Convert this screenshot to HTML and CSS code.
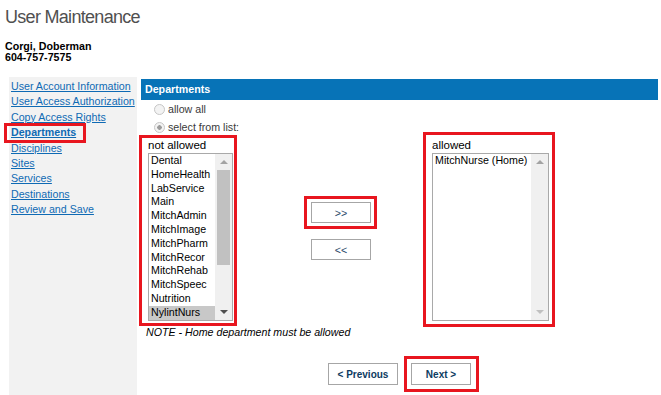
FILE: index.html
```html
<!DOCTYPE html>
<html lang="en">
<head>
  <meta charset="UTF-8">
  <meta name="viewport" content="width=device-width, initial-scale=1.0">
  <title>User Maintenance - Departments</title>
  <link rel="stylesheet" href="styles.css">
</head>
<body>
  <div class="page">
    <h1 class="page-title">User Maintenance</h1>
    <div class="user-info">
      <div>Corgi, Doberman</div>
      <div>604-757-7575</div>
    </div>

    <div class="layout">
      <nav class="side-nav">
        <a href="#">User Account Information</a>
        <a href="#">User Access Authorization</a>
        <a href="#">Copy Access Rights</a>
        <a href="#" class="current mark mark-nav">Departments</a>
        <a href="#">Disciplines</a>
        <a href="#">Sites</a>
        <a href="#">Services</a>
        <a href="#">Destinations</a>
        <a href="#">Review and Save</a>
      </nav>

      <div class="main">
        <div class="section-head">Departments</div>

        <div class="radio-row">
          <input type="radio" name="scope" id="scope-all" disabled>
          <label for="scope-all">allow all</label>
        </div>
        <div class="radio-row">
          <input type="radio" name="scope" id="scope-list" checked disabled>
          <label for="scope-list">select from list:</label>
        </div>

        <div class="pick">
          <div class="pick-col mark mark-from">
            <div class="pick-label">not allowed</div>
            <div class="listbox narrow">
              <ul class="options">
                <li>Dental</li>
                <li>HomeHealth</li>
                <li>LabService</li>
                <li>Main</li>
                <li>MitchAdmin</li>
                <li>MitchImage</li>
                <li>MitchPharm</li>
                <li>MitchRecor</li>
                <li>MitchRehab</li>
                <li>MitchSpeec</li>
                <li>Nutrition</li>
                <li class="selected">NylintNurs</li>
              </ul>
              <div class="scrollbar">
                <div class="sb-btn"><span class="tri-up"></span></div>
                <div class="sb-track"><div class="sb-thumb"></div></div>
                <div class="sb-btn"><span class="tri-down active"></span></div>
              </div>
            </div>
          </div>

          <div class="pick-moves">
            <div class="mark mark-add">
              <button class="move-btn">&gt;&gt;</button>
            </div>
            <button class="move-btn">&lt;&lt;</button>
          </div>

          <div class="pick-col wide mark mark-to">
            <div class="pick-label">allowed</div>
            <div class="listbox">
              <ul class="options">
                <li>MitchNurse (Home)</li>
              </ul>
              <div class="scrollbar">
                <div class="sb-btn"><span class="tri-up"></span></div>
                <div class="sb-track"></div>
                <div class="sb-btn"><span class="tri-down"></span></div>
              </div>
            </div>
          </div>
        </div>

        <div class="note">NOTE - Home department must be allowed</div>

        <div class="wizard-nav">
          <button class="wizard-btn prev">&lt; Previous</button>
          <div class="mark mark-next">
            <button class="wizard-btn next">Next &gt;</button>
          </div>
        </div>
      </div>
    </div>
  </div>
</body>
</html>
```

FILE: styles.css
```css
body {
  margin: 0;
  padding: 0;
  font-family: "Liberation Sans", Arial, sans-serif;
  font-size: 10.67px;
  color: #000;
  background-color: #fff;
}

.page {
  padding: 0 3px 0 5px;
}

.page-title {
  margin: 0;
  padding-top: 7px;
  font-size: 18px;
  line-height: 20px;
  font-weight: normal;
  letter-spacing: -0.7px;
  color: #505050;
}

.user-info {
  margin-top: 14px;
  font-weight: bold;
  line-height: 11px;
}

.layout {
  display: flex;
  margin: 14px 0 0 4px;
}

/* left navigation */
.side-nav {
  width: 126px;
  flex: none;
  padding: 2px 0 0 2px;
  background-color: #f2f2f2;
}

.side-nav a {
  display: block;
  width: fit-content;
  line-height: 15.4px;
  color: #0f6ab4;
  text-decoration: underline;
}

.side-nav a.current {
  font-weight: bold;
}

/* red annotation frames */
.mark {
  position: relative;
}

.mark::after {
  content: "";
  position: absolute;
  border: 3px solid #e8161f;
  pointer-events: none;
}

.mark-nav::after { inset: -2px -10px -2px -7px; }
.mark-from::after { inset: -2px -4px -5px -9px; }
.mark-add::after { inset: -6px -6px -6px -7px; }
.mark-to::after { inset: -5px -6px -6px -9px; }
.mark-next::after { inset: -7px -8px -7px -7px; }

/* main panel */
.main {
  width: 517px;
  margin-left: 4px;
  padding: 2px 0 20px;
}

.section-head {
  height: 21px;
  line-height: 21px;
  padding-left: 4px;
  background-color: #0773b7;
  color: #fff;
  font-weight: bold;
}

.radio-row {
  display: flex;
  align-items: center;
  height: 18px;
  color: #3a3a3a;
}

.radio-row:first-of-type {
  margin-top: 1px;
}

.radio-row input {
  appearance: none;
  width: 11px;
  height: 11px;
  margin: 0 3px 0 13px;
  border: 1px solid #c6c6c6;
  border-radius: 50%;
  background-color: #f3f3f3;
}

.radio-row input:checked {
  background: radial-gradient(circle, #9c9c9c 0, #9c9c9c 2px, #f3f3f3 2.5px);
}

.pick {
  display: flex;
  margin-top: 1px;
}

.pick-col {
  width: 85px;
  margin-left: 7px;
}

.pick-col.wide {
  width: 117px;
  margin-left: 61px;
}

.pick-label {
  font-size: 11.5px;
  line-height: 16px;
}

.listbox {
  display: flex;
  height: 166px;
  border: 1px solid #a9a9a9;
  background-color: #fff;
}

.options {
  flex: 1;
  margin: 0;
  padding: 0;
  list-style: none;
  overflow: hidden;
}

.options li {
  padding-left: 2px;
  line-height: 13.8px;
  white-space: nowrap;
}

.options li.selected {
  background-color: #c8c8c8;
}

.scrollbar {
  display: flex;
  flex-direction: column;
  width: 17px;
  background-color: #f0f0f0;
}

.sb-btn {
  display: flex;
  align-items: center;
  justify-content: center;
  height: 16px;
}

.sb-track {
  flex: 1;
}

.sb-thumb {
  height: 95px;
  margin: 0 2px;
  background-color: #c1c1c1;
}

.tri-up,
.tri-down {
  width: 0;
  height: 0;
  border-left: 4px solid transparent;
  border-right: 4px solid transparent;
}

.tri-up {
  border-bottom: 4px solid #a3a3a3;
}

.tri-down {
  border-top: 4px solid #c0c0c0;
}

.tri-down.active {
  border-top-color: #505050;
}

.pick-moves {
  display: flex;
  flex-direction: column;
  gap: 16px;
  margin: 65px 0 0 78px;
}

.move-btn {
  display: block;
  width: 60px;
  height: 21px;
  padding: 0;
  border: 1px solid #a6a6a6;
  background-color: #fff;
  font-family: inherit;
  font-size: 10.67px;
  color: #2a4a6a;
  cursor: pointer;
}

.note {
  margin-top: 4px;
  padding-left: 5px;
  line-height: 14px;
  font-style: italic;
}

.wizard-nav {
  display: flex;
  justify-content: center;
  gap: 13px;
  margin-top: 24px;
}

.wizard-btn {
  display: block;
  height: 22px;
  padding: 0;
  border: 1px solid #a6a6a6;
  background-color: #fff;
  font-family: inherit;
  font-size: 10px;
  font-weight: bold;
  color: #0d3b61;
  cursor: pointer;
}

.wizard-btn.prev {
  width: 70px;
}

.wizard-btn.next {
  width: 60px;
}
```
